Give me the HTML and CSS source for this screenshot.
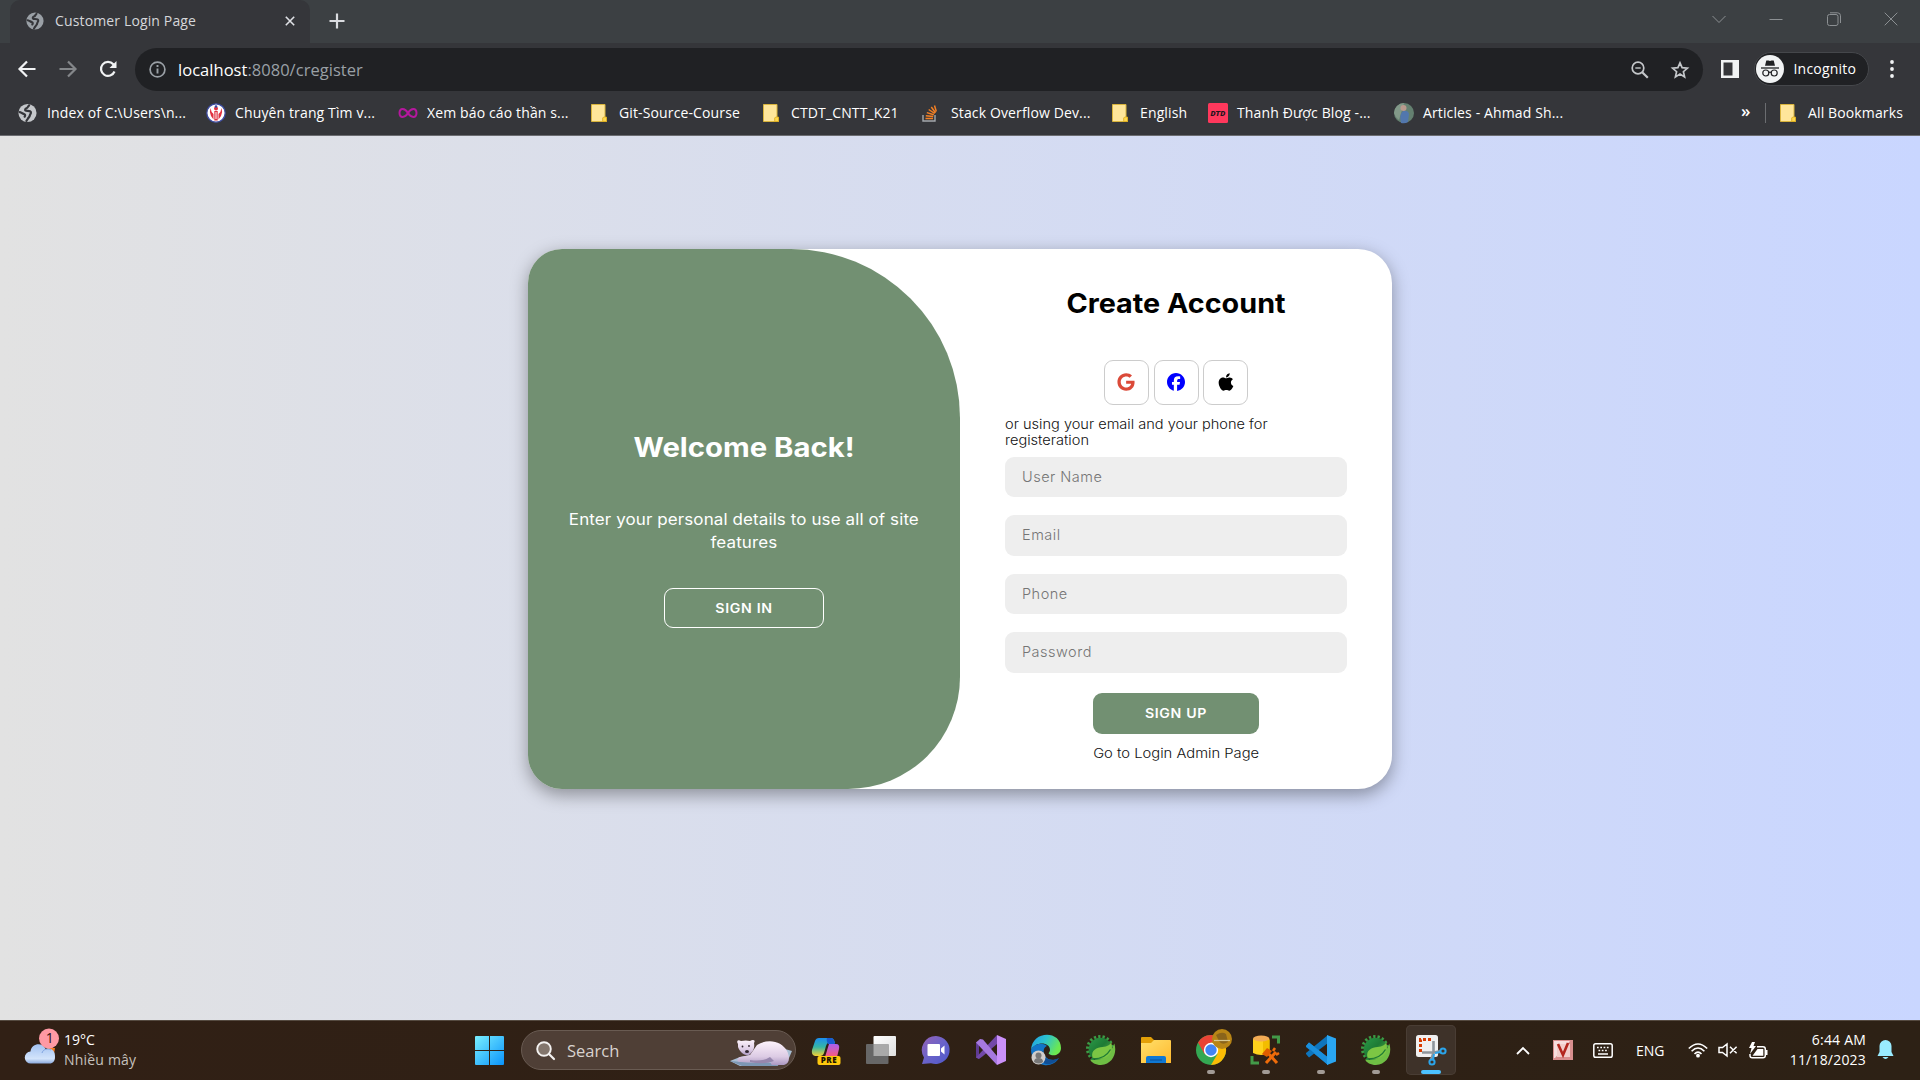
FILE: index.html
```html
<!DOCTYPE html>
<html lang="en">
<head>
<meta charset="utf-8">
<title>Customer Login Page</title>
<link rel="stylesheet" href="styles.css">
</head>
<body>
<svg width="0" height="0" class="defs" aria-hidden="true">
  <defs>
    <symbol id="globe" viewBox="0 0 18 18"><circle cx="9" cy="9" r="8.600" fill="currentColor"/><path d="M10.500 1.900C9.300 2.600 9.500 4 8 4.500 6.600 5 6.300 6.600 7.500 6.900c1.600.3 4.200-.3 4.700 1.300.4 1.400-.9 1.900-1 3.100-.1 1.500-1.400 2.200-2.200 3.600L8 16.500M1.700 8.200c1.600.4 2.800 1.500 4.400 2 1 .4.700 1.500.2 2.300" fill="none" stroke="#35363a" stroke-width="2.100" stroke-linecap="round"/></symbol>
    <symbol id="folder" viewBox="0 0 18 20"><path d="M1.500 1.500h13.500v13h1.500v4H1.500z" fill="#ffe69a" stroke="#d9b43c" stroke-width="1"/><path d="M12.700 18.500v-3.500l1-1h2.800v4.500z" fill="#ffd84d" stroke="#d9a91c" stroke-width=".8"/></symbol>
    <linearGradient id="leaf" x1="0" y1="0" x2="1" y2="1"><stop offset="0" stop-color="#2a9a48"/><stop offset=".45" stop-color="#1e7a35"/><stop offset="1" stop-color="#63b344"/></linearGradient>
    <symbol id="spring" viewBox="0 0 30 30"><circle cx="14" cy="14" r="12.500" fill="none" stroke="#3c9c45" stroke-width="3" stroke-dasharray="2.300 2.060"/><circle cx="14.500" cy="14.500" r="11.800" fill="url(#leaf)"/><path d="M28.300 8.500C31.500 18 26.500 29.500 15 30 9.500 30 5.500 27.500 4 24.500c9 2 19-1 24.300-16z" fill="#6fbe44"/><path d="M6.500 22.500C4.500 15 11 12.500 16.500 12c5-.4 7-2 8.800-4.500 2.500 9-2.300 15.500-9.800 15.900-3 .1-6.500.3-9-.9z" fill="#7cc644"/><path d="M5 23.800c8 .6 15.500-2.300 19.500-9.300" fill="none" stroke="#1e7a35" stroke-width="1.300"/></symbol>
    <linearGradient id="win" x1="0" y1="0" x2="1" y2="1"><stop offset="0" stop-color="#79efff"/><stop offset="1" stop-color="#0a93fb"/></linearGradient>
    <linearGradient id="cloud" x1="0" y1="0" x2="0" y2="1"><stop offset="0" stop-color="#a3c2f2"/><stop offset=".75" stop-color="#d3e4fb"/><stop offset="1" stop-color="#8aa9dd"/></linearGradient>
    <linearGradient id="coA" x1="0" y1="0" x2="0" y2="1"><stop offset="0" stop-color="#1b8ef0"/><stop offset=".5" stop-color="#35b6a6"/><stop offset="1" stop-color="#f5d232"/></linearGradient>
    <linearGradient id="coB" x1="0" y1="0" x2="0" y2="1"><stop offset="0" stop-color="#a95ff0"/><stop offset="1" stop-color="#fd5b78"/></linearGradient>
    <linearGradient id="tv" x1="0" y1="0" x2="1" y2="1"><stop offset="0" stop-color="#fff"/><stop offset="1" stop-color="#dedede"/></linearGradient>
    <linearGradient id="chat" x1="0" y1="0" x2="1" y2="1"><stop offset="0" stop-color="#9461b6"/><stop offset=".5" stop-color="#6a63c9"/><stop offset="1" stop-color="#4d57c9"/></linearGradient>
    <linearGradient id="edge" x1="0" y1="0" x2="1" y2=".4"><stop offset="0" stop-color="#1f9de8"/><stop offset=".5" stop-color="#2cc3cf"/><stop offset="1" stop-color="#6ce850"/></linearGradient>
    <linearGradient id="bear" x1="0" y1="0" x2="0" y2="1"><stop offset="0" stop-color="#fdf3fc"/><stop offset=".65" stop-color="#dccbe4"/><stop offset="1" stop-color="#ab98c2"/></linearGradient>
    <linearGradient id="exp" x1="0" y1="0" x2="1" y2="1"><stop offset="0" stop-color="#ffe06b"/><stop offset="1" stop-color="#ffb92e"/></linearGradient>
  </defs>
</svg>

<header class="browser">
  <div class="tabstrip">
    <div class="tab">
      <svg class="tab-icon" width="18" height="18"><use href="#globe"/></svg>
      <span class="tab-title">Customer Login Page</span>
      <svg width="10" height="10" viewBox="0 0 10 10"><path d="M.8.8l8.400 8.400M9.200.8L.8 9.200" stroke="#dfe1e5" stroke-width="1.600"/></svg>
    </div>
    <svg class="newtab" width="16" height="16" viewBox="0 0 16 16"><path d="M8 .5v15M.5 8h15" stroke="#dadce0" stroke-width="2.200"/></svg>
    <div class="window-buttons">
      <svg viewBox="0 0 14 14"><path d="M.5 4L7 10.500 13.500 4" /></svg>
      <svg viewBox="0 0 14 14"><path d="M.5 7.500h13"/></svg>
      <svg viewBox="0 0 14 14"><rect x=".5" y="2.500" width="10.500" height="11" rx="2"/><path d="M3 .8h7.500a3 3 0 0 1 3 3V11"/></svg>
      <svg viewBox="0 0 14 14"><path d="M.7.7l12.600 12.600M13.300.7L.7 13.300"/></svg>
    </div>
  </div>

  <div class="toolbar">
    <svg class="nav" width="18" height="18" viewBox="0 0 18 18"><path d="M17.500 9H2M9 1.500L1.500 9 9 16.500" stroke="#f1f3f4"/></svg>
    <svg class="nav" width="18" height="18" viewBox="0 0 18 18"><path d="M.5 9H16M9 1.500L16.500 9 9 16.500" stroke="#84878a"/></svg>
    <svg class="nav" width="18" height="18" viewBox="0 0 18 18"><path d="M15.500 11.500A7 7 0 1 1 14.300 4.300L16 6" stroke="#f1f3f4"/><path d="M17.500 1v7h-7z" fill="#f1f3f4"/></svg>
    <div class="omnibox">
      <svg width="17" height="17" viewBox="0 0 17 17"><circle cx="8.500" cy="8.500" r="7.400" fill="none" stroke="#9aa0a6" stroke-width="1.700"/><path d="M8.500 7.500v5M8.500 4v2" stroke="#9aa0a6" stroke-width="1.900"/></svg>
      <span class="url"><b>localhost</b>:8080/cregister</span>
      <svg width="18" height="18" viewBox="0 0 18 18"><circle cx="7" cy="7" r="5.800" fill="none" stroke="#c4c7ca" stroke-width="1.700"/><path d="M11.200 11.200l5.600 5.600" stroke="#c4c7ca" stroke-width="2.200"/><path d="M4.300 7h5.400" stroke="#c4c7ca" stroke-width="1.400"/></svg>
      <svg class="star" width="18" height="18" viewBox="0 0 18 18"><path d="M9 1.800l2.100 4.900 5.300.5-4 3.500 1.200 5.200L9 13.100l-4.600 2.800 1.200-5.200-4-3.500 5.300-.5z" fill="none" stroke="#c4c7ca" stroke-width="1.700"/></svg>
    </div>
    <svg width="18" height="18" viewBox="0 0 18 18"><path d="M0 0h18v18H0zM2.500 2.500v13h9v-13z" fill="#f1f3f4" fill-rule="evenodd"/></svg>
    <div class="incognito">
      <svg width="28" height="28" viewBox="0 0 28 28"><circle cx="14" cy="14" r="14" fill="#f1f3f4"/><path d="M10.300 5.500h2.200l1.500.6 1.500-.6h2.200l1.300 5.200H9z" fill="#202124"/><path d="M5 13h18" stroke="#202124" stroke-width="1.300"/><g fill="none" stroke="#202124" stroke-width="1.200"><circle cx="9.800" cy="18" r="3"/><circle cx="18.200" cy="18" r="3"/><path d="M12.700 17.500q1.300-.8 2.600 0"/></g></svg>
      <span>Incognito</span>
    </div>
    <svg class="menu" width="4" height="18" viewBox="0 0 4 18"><g fill="#f1f3f4"><circle cx="2" cy="2" r="1.900"/><circle cx="2" cy="9" r="1.900"/><circle cx="2" cy="16" r="1.900"/></g></svg>
  </div>

  <nav class="bookmarks">
    <a><svg width="19" height="20" class="light"><use href="#globe"/></svg><span>Index of C:\Users\n...</span></a>
    <a><svg width="20" height="20" viewBox="0 0 20 20"><circle cx="10" cy="10" r="9.200" fill="#fff" stroke="#3c4ba0" stroke-width="1.300"/><path d="M4.500 5Q3 9 5 13l2.500 3.500V11Q5 9 4.500 5zM15.500 5Q17 9 15 13l-2.500 3.500V11Q15 9 15.500 5zM8.300 8h3.400v9.500H8.300z" fill="#e0313f"/><path d="M10 9v7" stroke="#fff" stroke-width="1"/><circle cx="10" cy="5.500" r="2" fill="#e0313f"/><circle cx="10" cy="3.500" r="1.300" fill="#3c4ba0"/></svg><span>Chuyên trang Tìm v...</span></a>
    <a><svg width="20" height="20" viewBox="0 0 20 20"><path d="M10 10C7 5 1.500 4.500 1.500 10S7 15 10 10s8.500-5.500 8.500 0S13 15 10 10z" fill="none" stroke="#b5179e" stroke-width="2"/></svg><span>Xem báo cáo thần s...</span></a>
    <a><svg width="18" height="20"><use href="#folder"/></svg><span>Git-Source-Course</span></a>
    <a><svg width="18" height="20"><use href="#folder"/></svg><span>CTDT_CNTT_K21</span></a>
    <a><svg width="16" height="20" viewBox="0 0 16 20"><path d="M1 12v6h12v-6" fill="none" stroke="#a4a8ac" stroke-width="1.400"/><path d="M3.500 15.500h7.500M3.800 12.800l7.400.8M4.800 9.600l7 2.200M6.700 6.500l6 4M9.300 4l4.200 5.700M12.500 2.500l1.800 6" stroke="#f48024" stroke-width="1.500"/></svg><span>Stack Overflow Dev...</span></a>
    <a><svg width="18" height="20"><use href="#folder"/></svg><span>English</span></a>
    <a><svg width="20" height="20" viewBox="0 0 20 20"><rect width="20" height="20" rx="1.500" fill="#ff385c"/><text x="10" y="12.800" class="dtd">DTD</text></svg><span>Thanh Được Blog -...</span></a>
    <a><svg width="20" height="20" viewBox="0 0 20 20"><circle cx="10" cy="10" r="10" fill="#648070"/><path d="M0 10A10 10 0 0 1 10 0L5 17Q1 14 0 10z" fill="#829989"/><path d="M7 20q-2-9 2-12 5-1 6 3l-1 8q-3 2-7 1z" fill="#5277ad"/><circle cx="9.500" cy="5" r="3" fill="#b99a8d"/></svg><span>Articles - Ahmad Sh...</span></a>
    <span class="more">»</span>
    <a class="all"><svg width="18" height="20"><use href="#folder"/></svg><span>All Bookmarks</span></a>
  </nav>
</header>

<main class="page">
  <section class="card">
    <div class="welcome">
      <h1>Welcome Back!</h1>
      <p>Enter your personal details to use all of site<br>features</p>
      <button type="button"><span>SIGN IN</span></button>
    </div>
    <form class="signup">
      <h1>Create Account</h1>
      <div class="social">
        <a><svg width="18" height="18" viewBox="0 0 488 512"><path fill="#db4a39" d="M488 261.800C488 403.300 391.100 504 248 504 110.800 504 0 393.200 0 256S110.800 8 248 8c66.800 0 123 24.500 166.300 64.900l-67.500 64.900C258.500 52.600 94.300 116.600 94.300 256c0 86.500 69.100 156.600 153.700 156.600 98.200 0 135-70.400 140.800-106.900H248v-85.300h236.100c2.300 12.700 3.900 24.900 3.900 41.400z"/></svg></a>
        <a><svg width="18" height="18" viewBox="0 0 512 512"><path fill="#00f" d="M512 256C512 114.600 397.400 0 256 0S0 114.600 0 256C0 376 82.700 476.800 194.200 504.500V334.200H141.400V256h52.800V222.300c0-87.100 39.400-127.500 125-127.500c16.200 0 44.200 3.200 55.700 6.400V172c-6-.6-16.500-1-29.600-1c-42 0-58.200 15.900-58.200 57.200V256h83.600l-14.400 78.200H287V510.100C413.800 494.800 512 386.900 512 256z"/></svg></a>
        <a><svg width="16" height="20" viewBox="0 0 384 512"><path d="M318.700 268.700c-.2-36.700 16.400-64.400 50-84.800-18.800-26.900-47.200-41.700-84.700-44.600-35.500-2.800-74.300 20.700-88.500 20.700-15 0-49.400-19.700-76.400-19.700C63.300 141.200 4 184.800 4 273.500q0 39.300 14.400 81.200c12.800 36.700 59 126.700 107.200 125.200 25.200-.6 43-17.900 75.800-17.900 31.800 0 48.300 17.900 76.400 17.900 48.600-.7 90.400-82.500 102.600-119.300-65.200-30.700-61.700-90-61.700-91.900zm-56.600-164.200c27.300-32.400 24.800-61.900 24-72.500-24.100 1.400-52 16.400-67.900 34.900-17.500 19.800-27.800 44.300-25.600 71.900 26.100 2 49.900-11.400 69.500-34.300z"/></svg></a>
      </div>
      <span class="hint">or using your email and your phone for<br>registeration</span>
      <div class="fields">
        <input type="text" placeholder="User Name">
        <input type="email" placeholder="Email">
        <input type="tel" placeholder="Phone">
        <input type="password" placeholder="Password">
      </div>
      <button type="button"><span>SIGN UP</span></button>
      <a class="admin">Go to Login Admin Page</a>
    </form>
  </section>
</main>

<footer class="taskbar">
  <div class="weather">
    <svg width="34" height="40" viewBox="0 0 34 40"><path d="M22 20h8l-1 6h-6z" fill="#f47b20"/><path d="M6 35.500a6 6 0 0 1-.5-12C6.500 15 18 14 20.500 21c6-2 10 2 9.500 8 0 4-2 6.500-5.500 6.500z" fill="url(#cloud)"/><path d="M17 25c1-4 6-5 9-3" fill="none" stroke="#7fa3e0" stroke-width="1"/><circle cx="24" cy="10.500" r="10" fill="#ff99a4"/><text x="24.700" y="15.300" class="badge">1</text></svg>
    <div><span>19°C</span><span class="dim">Nhiều mây</span></div>
  </div>
  <svg class="start" width="29" height="29" viewBox="0 0 29 29"><path d="M1 0h13v14H0V1q0-1 1-1zM15 0h13q1 0 1 1v13H15zM0 15h14v14H1q-1 0-1-1zM15 15h14v13q0 1-1 1H15z" fill="url(#win)"/></svg>
  <div class="search">
    <svg width="19" height="19" viewBox="0 0 19 19"><circle cx="8" cy="8" r="6.800" fill="#83766d" stroke="#f4f2f1" stroke-width="1.900"/><path d="M13 13l5 5" stroke="#f4f2f1" stroke-width="2.200" stroke-linecap="round"/></svg>
    <span>Search</span>
    <svg width="62" height="28" viewBox="0 0 62 28"><path d="M0 22l10-4 45-8 7 2-3 7-12 8H10z" fill="#a9bfd4"/><path d="M0 22l12 5h36l-4-3-32-1z" fill="#7d97b5"/><path d="M27 6C38-1 52 2 57 12c3 6 3 12-3 14H42c-3-2 0-4 3-5-8 3-20 3-35 2-4 0-3-4 0-5l10-2z" fill="url(#bear)"/><path d="M20 21q13 2 20-3l4 4q-10 4-24 1z" fill="#9787ae"/><path d="M8 5C6 2 8 0 11 2q5-1 9 0c3-2 6-1 4 2 1 5-1 9-5 12-5 1-9-3-11-8z" fill="url(#bear)"/><g fill="#30252f"><ellipse cx="17" cy="12.500" rx="2" ry="1.600"/><circle cx="12.500" cy="7.500" r=".9"/><circle cx="19" cy="7" r=".9"/></g></svg>
  </div>
  <div class="apps">
    <div class="app"><svg viewBox="0 0 30 30"><path d="M8 3h12q3 0 4 5h-7q-1 0-2 3l-2 7q-1 3-4 3H4q-4-1-3-6L4 6q1-3 4-3z" fill="url(#coA)"/><path d="M16 3h4q3 0 4 6h-7q-2-4-1-6z" fill="#195bd0"/><path d="M18 9h7q4 0 3 5l-2 8H14z" fill="url(#coB)"/><rect x="6.500" y="21" width="23" height="9" rx="2" fill="#ffc90e"/><text x="18" y="28.300" class="pre">PRE</text></svg></div>
    <div class="app"><svg viewBox="0 0 30 30"><rect x="7.500" y="1" width="22.500" height="20" rx="1" fill="url(#tv)"/><rect x="0" y="9" width="22.500" height="20" rx="1" fill="#676767"/><path d="M7.500 9h15v12h-15z" fill="#a9a9a9"/></svg></div>
    <div class="app"><svg viewBox="0 0 30 30"><path d="M15 1a14 14 0 1 1-5 27.200L1 29l2-6.500A14 14 0 0 1 15 1z" fill="url(#chat)"/><rect x="6.500" y="9" width="12.500" height="12" rx="1" fill="#fff"/><path d="M20 13.500l3.500-3v9l-3.500-3z" fill="#fff"/></svg></div>
    <div class="app"><svg viewBox="0 0 30 30"><path d="M0 7l4-2.500L22 23v-6L0 24z" fill="none"/><path d="M0 7.500L3 6v18l-3-1.500z" fill="#5f3b93"/><path d="M3 24L0 22.500 21 0v9L7 21z" fill="#7248a8"/><path d="M4 4L0 7.500 21 30v-9L7 4.500z" fill="#a679df"/><path d="M21 0l9 4v22l-9 4z" fill="#cb91fa"/></svg></div>
    <div class="app"><svg viewBox="0 0 30 30"><path d="M0 15C1-5 30-5 30 13c0 7-8 9-12 6-1-1 1-2 1-4 0-8-14-9-19 0z" fill="url(#edge)"/><path d="M0 15C3 8 12 7 16 11c-6 2-4 14 6 14 3 0 5-1 6-2-3 5-9 8-15 7C5 29 0 22 0 15z" fill="#1275c8"/><path d="M12 16c-1 8 8 11 16 7-5 7-13 8-19 3-2-4-1-8 3-10z" fill="#104f96"/><circle cx="7.500" cy="22.500" r="7" fill="#d0cdcb"/><circle cx="7.500" cy="20.500" r="3" fill="#777"/><path d="M3 27q0-4 4.500-4t4.500 4q-4 3-9 0z" fill="#777"/></svg></div>
    <div class="app"><svg><use href="#spring"/></svg></div>
    <div class="app"><svg viewBox="0 0 30 30"><path d="M0 3q0-1 1-1h9l3 3h15v5H0z" fill="#e3a008"/><path d="M0 8h10l3-3h16q1 0 1 1v22H0z" fill="url(#exp)"/><path d="M5 28v-5q0-2 2-2h16q2 0 2 2v5z" fill="#0f78d4"/><path d="M9 25h12" stroke="#0a4f98"/></svg></div>
    <div class="app running"><svg viewBox="0 0 30 30"><circle cx="15" cy="15" r="15" fill="#34a853"/><path d="M2 7.500A15 15 0 0 1 28 7.500H15L8.500 19z" fill="#ea4335"/><path d="M15 7.500h13A15 15 0 0 1 15 30l6.500-11z" fill="#fbbc05"/><circle cx="15" cy="15" r="7.200" fill="#fff"/><circle cx="15" cy="15" r="5.700" fill="#4285f4"/><circle cx="26" cy="4" r="10" fill="#b88516"/><path d="M20 0q6-4 10-1l2 8q-6 4-9-1z" fill="#8a641b"/><path d="M18 5.500h16" stroke="#d9c88f" stroke-width="1.200"/></svg></div>
    <div class="app running"><svg viewBox="0 0 30 30"><path d="M2 4v14q8 4 16.500 0V4z" fill="#ffd21c"/><path d="M12 5h6.500v13L12 20z" fill="#f3bd00"/><ellipse cx="10.200" cy="3.500" rx="8.200" ry="3" fill="#f3ac55"/><path d="M21 2h6.500v6.500M1 21v7h7" fill="none" stroke="#439a48" stroke-width="3"/><path d="M15 28l10-11M16 17l10 11" stroke="#ef6c0a" stroke-width="3"/><path d="M11 19l5-6 5 3-5 6z" fill="#df5d00"/><path d="M22 16l2-3M28 18l-3 2" stroke="#ef6c0a" stroke-width="2.500"/></svg></div>
    <div class="app running"><svg viewBox="0 0 30 30"><path d="M0 11l3-3.500L22 22.500V30L0 12z" fill="#1287d6"/><path d="M0 19l3 3.500L22 8V0L0 18z" fill="#0e75bd"/><path d="M0 11l3-3.500 19 15V30z" fill="#1a8fdc"/><path d="M21 0l9 3.500v23L21 30z" fill="#2aa6f2"/></svg></div>
    <div class="app running"><svg><use href="#spring"/></svg></div>
    <div class="app active"><svg viewBox="0 0 30 30"><rect width="22" height="22" rx="2.500" fill="#f0f0f0"/><path d="M4.500 17V4.500H17" fill="none" stroke="#d83b01" stroke-width="3" stroke-dasharray="3 2"/><path d="M17.500 6v12L15 25M6 17.500h12l7-1.500" fill="none" stroke="#8e959b" stroke-width="2.600"/><g fill="none" stroke="#2ba5eb" stroke-width="2"><circle cx="27" cy="16" r="2.600"/><circle cx="16" cy="27" r="2.600"/><path d="M19 18l6-1M18 19l-1 6"/></g></svg></div>
  </div>
  <div class="tray">
    <svg width="14" height="9" viewBox="0 0 14 9"><path d="M1 8l6-6 6 6" fill="none" stroke="#fff" stroke-width="1.800"/></svg>
    <svg class="vkey" width="20" height="20" viewBox="0 0 20 20"><path d="M0 0h20v20H0z" fill="#d88f8f"/><path d="M1 1h16L2 18H1z" fill="#f7dede"/><path d="M4 4h13v13H4z" fill="#f2cdcb"/><path d="M5 4l5 11 5-12" fill="none" stroke="#b3261e" stroke-width="2.600"/></svg>
    <svg class="kbd" width="20" height="15" viewBox="0 0 20 15"><rect x=".8" y=".8" width="18.400" height="13.400" rx="1.800" fill="none" stroke="#fff" stroke-width="1.500"/><path d="M4 4.500h12M5.500 7.500h10" stroke="#fff" stroke-width="1.700" stroke-dasharray="1.700 1.600"/><path d="M5 11h10" stroke="#fff" stroke-width="1.500"/></svg>
    <span class="lang">ENG</span>
    <svg class="wifi" width="20" height="16" viewBox="0 0 20 16"><g fill="none" stroke="#fff" stroke-width="1.600"><path d="M.8 6.500q9.200-9 18.400 0M3.600 9.300q6.400-6.500 12.800 0M6.500 12q3.500-3.800 7 0"/></g><circle cx="10" cy="13.700" r="1.900" fill="#fff"/></svg>
    <svg class="vol" width="20" height="14" viewBox="0 0 20 14"><path d="M1 4.500h3.500L9 1v12L4.500 9.500H1zM12 3.700l6.600 6.600M18.600 3.700L12 10.300" fill="none" stroke="#fff" stroke-width="1.500"/></svg>
    <svg class="bat" width="20" height="17" viewBox="0 0 20 17"><path d="M9 4.800h6q2.300 0 2.300 2.300v6.400q0 2.300-2.300 2.300H4.300Q2 15.800 2 13.500V12" fill="none" stroke="#fff" stroke-width="1.500"/><path d="M4.500 13.800L9.500 7h5.800v6.800zM17.500 8h2v5h-2zM4 0h3L5.500 4H8L2 12l1.500-6H1z" fill="#fff"/></svg>
    <div class="clock"><span>6:44 AM</span><span>11/18/2023</span></div>
    <svg width="17" height="20" viewBox="0 0 17 20"><path d="M8.500 0a6 6 0 0 1 6 6v6l2 4H.5l2-4V6a6 6 0 0 1 6-6zM5.500 17h6q-3 4-6 0z" fill="#99ebff"/></svg>
  </div>
</footer>
</body>
</html>
```
FILE: styles.css
```css
* { box-sizing: border-box; margin: 0; padding: 0; }
body { width: 1920px; height: 1080px; overflow: hidden; display: flex; flex-direction: column; font-family: "Open Sans", "Noto Sans", sans-serif; font-size: 14px; color: #fff; }
svg { display: block; flex: none; overflow: visible; }
.defs { position: absolute; }
span { white-space: nowrap; }

/* Browser chrome */
.browser { height: 136px; background: #35363a; border-bottom: 1px solid #6b6c70; flex: none; }
.tabstrip { height: 43px; background: #3c4043; display: flex; align-items: center; padding-left: 10px; }
.tab { width: 300px; height: 43px; background: #35363a; border-radius: 10px 10px 0 0; display: flex; align-items: center; padding: 0 15px 2px 16px; }
.tab-icon { color: #9aa0a6; }
.tab-title { flex: 1; margin-left: 11px; color: #d5d7da; font-size: 14px; letter-spacing: .14px; }
.newtab { margin-left: 19px; margin-bottom: 1px; }
.window-buttons { margin-left: auto; display: flex; gap: 43.300px; padding: 0 22px 6px 0; }
.window-buttons svg { width: 14px; height: 14px; fill: none; stroke: #8c9093; stroke-width: 1; }

.toolbar { height: 48px; display: flex; align-items: center; padding: 5px 26px 0 18px; }
.toolbar > svg { margin-bottom: 1px; }
.nav { margin-right: 22.500px; fill: none; stroke-width: 2.200; }
.omnibox { width: 1568px; height: 43px; border-radius: 22px; background: #202124; display: flex; align-items: center; padding: 0 14px; margin-right: 18px; margin-left: -4.500px; }
.url { flex: 1; margin-left: 12px; color: #9aa0a6; font-size: 16.500px; letter-spacing: .03px; }
.url b { font-weight: 400; color: #fff; }
.star { margin-left: 22px; }
.incognito { width: 115px; height: 34px; border: 1px solid #45474b; border-radius: 17px; background: #202124; margin-left: 15px; margin-bottom: 2px; display: flex; align-items: center; gap: 9.500px; padding-left: 1px; font-size: 14px; letter-spacing: .2px; }
.menu { margin-left: auto; }

.bookmarks { height: 43px; display: grid; grid-template-columns: 188px 192px 192px 172px 160px 189px 97px 186px 347px 38px auto; align-items: center; padding-left: 18px; font-size: 14px; letter-spacing: .13px; }
.bookmarks a { display: grid; grid-template-columns: 29px auto; align-items: center; }
.bookmarks a span { margin-top: -1px; }
.light { color: #c4c7ca; }
.more { font-size: 17px; font-weight: 600; padding-bottom: 4px; }
.bookmarks .all { position: relative; }
.bookmarks .all::before { content: ""; position: absolute; left: -14px; top: 0; height: 20px; width: 1px; background: #6b6d70; }
.dtd { font: italic 900 8px "Roboto", sans-serif; text-anchor: middle; fill: #23151c; }

/* Page */
.page { flex: 1; background: linear-gradient(to right, #e2e2e2, #c9d6ff); padding-top: 113px; font-family: "Inter", sans-serif; }
.card { width: 864px; height: 540px; margin: 0 auto; background: #fff; border-radius: 34px; overflow: hidden; display: grid; grid-template-columns: 432px 432px; box-shadow: 0 5.600px 17px rgba(0, 0, 0, .35); }
.card h1 { font-size: 26.500px; line-height: 34px; font-weight: 700; text-align: center; }
.card button { font: 600 13px/20px "Inter", sans-serif; letter-spacing: .6px; color: #fff; border-radius: 9px; }
.card button span { display: block; transform: scaleX(1.090); }
.welcome { background: #729072; border-radius: 0 169px 112px 0; display: flex; flex-direction: column; align-items: center; padding-top: 181px; }
.welcome h1 { transform: scaleX(1.105); }
.welcome p { margin-top: 45px; font-size: 15.500px; line-height: 22.500px; letter-spacing: .1px; text-align: center; white-space: nowrap; transform: scaleX(1.095); }
.welcome button { margin-top: 34px; width: 160px; height: 40px; border: 1px solid #fff; background: transparent; }
.signup { color: #000; padding: 37px 45px 0; display: flex; flex-direction: column; align-items: center; }
.signup h1 { font-weight: 650; transform: scaleX(1.085); }
.social { display: flex; gap: 4.500px; margin-top: 40px; }
.social a { width: 45px; height: 45px; border: 1px solid #ccc; border-radius: 9px; display: grid; place-items: center; padding-bottom: 2px; }
.social a:first-child { padding-right: 1.500px; }
.hint { align-self: flex-start; margin-top: 11px; font-size: 13px; line-height: 16px; font-weight: 300; color: #111; transform: scaleX(1.120); transform-origin: left; }
.fields { width: 342px; margin-top: 8.500px; display: grid; gap: 18px; }
.fields input { height: 40.500px; border: 0; border-radius: 9px; background: #eee; padding: 0 17px 1px; font: 300 14.500px "Inter", sans-serif; letter-spacing: .5px; }
.fields input::placeholder { color: #757575; }
.signup button { width: 166px; height: 41px; border: 0; background: #729072; margin-top: 20.500px; padding-bottom: 1px; }
.admin { margin-top: 11px; font-size: 13px; line-height: 17px; font-weight: 300; color: #111; white-space: nowrap; transform: scaleX(1.135); }

/* Taskbar */
.taskbar { height: 60px; flex: none; background: linear-gradient(to right, #312015, #2d2115); border-top: 1px solid #554a40; display: flex; align-items: center; padding: 0 0 1px 25px; }
.weather { width: 450px; display: flex; align-items: center; gap: 5px; }
.weather svg { margin-top: -5px; }
.weather div { display: flex; flex-direction: column; line-height: 20px; font-size: 14px; margin-top: -1px; }
.dim { color: #c6c1bd; letter-spacing: .2px; }
.badge { font: 14px "Open Sans", sans-serif; text-anchor: middle; fill: #2b1215; }
.pre { font: 800 8px "Open Sans", sans-serif; letter-spacing: .5px; text-anchor: middle; fill: #1c1400; }
.search { width: 275px; height: 40px; margin-left: 17px; border-radius: 20px; background: #4f3f36; border: 1px solid #695b52; display: flex; align-items: center; padding: 0 3px 0 14px; font-size: 16.500px; color: #d9d3cf; }
.search span { flex: 1; margin-left: 12px; }
.search svg:last-child { margin-top: 6px; }
.apps { display: flex; margin-left: 5px; gap: 5px; }
.app { width: 50px; height: 50px; border-radius: 5px; display: flex; flex-direction: column; align-items: center; padding-top: 10px; }
.app > svg { width: 30px; height: 30px; }
.running::after, .active::after { content: ""; width: 8px; height: 4px; border-radius: 2px; background: #a29b96; margin-top: 5px; }
.active { background: #3e3229; box-shadow: inset 0 0 0 1px #493d34; }
.active::after { width: 20px; background: #4cc2ff; }
.tray { display: flex; align-items: center; margin-left: 60px; }
.vkey { margin-left: 23px; }
.kbd { margin-left: 20px; }
.lang { margin-left: 23px; width: 30px; }
.wifi { margin-left: 22px; }
.vol { margin-left: 10px; }
.bat { margin-left: 10px; }
.clock { width: 98px; display: flex; flex-direction: column; align-items: flex-end; line-height: 20px; letter-spacing: .2px; margin: -1px 11px 0 0; }
```
